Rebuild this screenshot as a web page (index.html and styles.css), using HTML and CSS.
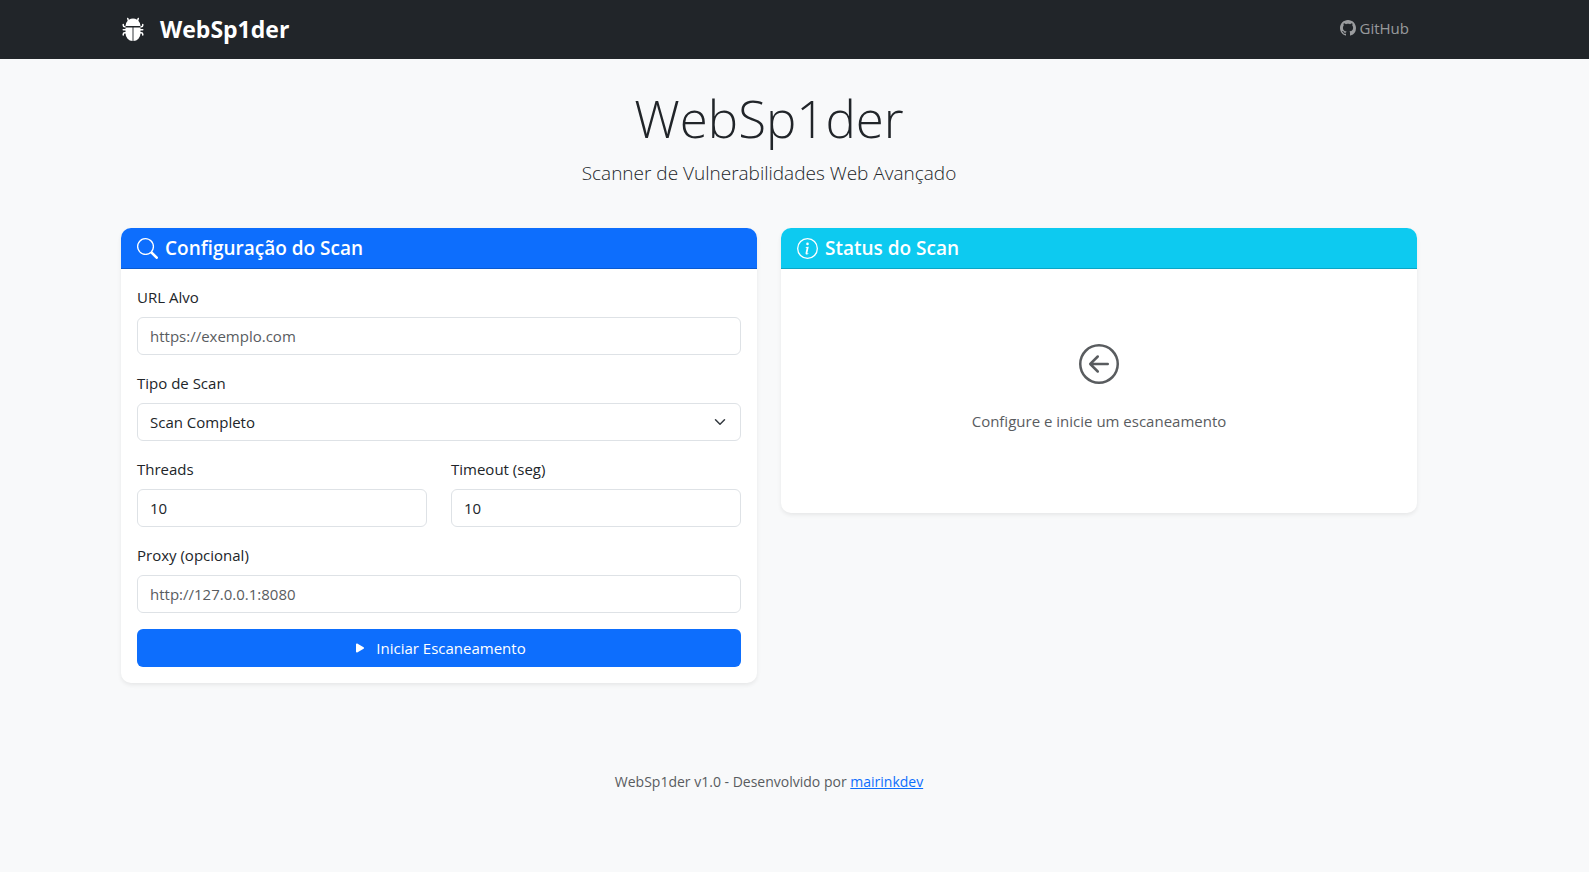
FILE: index.html
```html
<!DOCTYPE html>
<html lang="pt-BR">
<head>
<meta charset="utf-8">
<meta name="viewport" content="width=device-width, initial-scale=1">
<title>WebSp1der</title>
<link rel="stylesheet" href="styles.css">
</head>
<body>
<nav class="navbar">
  <div class="container navbar-row">
    <a class="brand" href="#">
      <svg class="brand-icon" viewBox="0 0 16 16" fill="currentColor" aria-hidden="true"><path d="M4.978.855a.5.5 0 1 0-.956.29l.41 1.352A5 5 0 0 0 3 6h10a5 5 0 0 0-1.432-3.503l.41-1.352a.5.5 0 1 0-.956-.29l-.291.956A5 5 0 0 0 8 1a5 5 0 0 0-2.731.811l-.29-.956z"/><path d="M13 6v1H8.300v8.975A5 5 0 0 0 13 11h.5a.5.5 0 0 1 .5.5v.5a.5.5 0 1 0 1 0v-.5a1.5 1.5 0 0 0-1.5-1.5H13V9h1.500a.5.5 0 0 0 0-1H13V7h.5A1.5 1.5 0 0 0 15 5.500V5a.5.5 0 0 0-1 0v.5a.5.5 0 0 1-.5.5zm-5.300 9.975V7H3V6h-.5a.5.5 0 0 1-.5-.5V5a.5.5 0 0 0-1 0v.5A1.500 1.500 0 0 0 2.500 7H3v1H1.500a.5.5 0 0 0 0 1H3v1h-.5A1.500 1.500 0 0 0 1 11.500v.5a.5.5 0 1 0 1 0v-.5a.5.5 0 0 1 .5-.5H3a5 5 0 0 0 4.700 4.975"/></svg>
      <span>WebSp1der</span>
    </a>
    <a class="nav-link" href="#">
      <svg class="icon" viewBox="0 0 16 16" fill="currentColor" aria-hidden="true"><path d="M8 0C3.58 0 0 3.58 0 8c0 3.54 2.29 6.53 5.47 7.59.4.07.55-.17.55-.38 0-.19-.01-.82-.01-1.49-2.010.37-2.530-.49-2.690-.94-.09-.23-.48-.94-.82-1.130-.28-.15-.68-.52-.01-.53.63-.01 1.080.58 1.230.82.72 1.210 1.870.87 2.330.66.07-.52.28-.87.51-1.070-1.780-.2-3.640-.89-3.640-3.950 0-.87.31-1.590.82-2.150-.08-.2-.36-1.020.08-2.120 0 0 .67-.21 2.200.82.64-.18 1.320-.27 2-.27s1.360.09 2 .27c1.530-1.040 2.200-.82 2.200-.82.44 1.100.16 1.920.08 2.120.51.56.82 1.270.82 2.150 0 3.070-1.870 3.750-3.650 3.950.29.25.54.73.54 1.480 0 1.070-.01 1.930-.01 2.200 0 .21.15.46.55.38A8.010 8.010 0 0 0 16 8c0-4.420-3.580-8-8-8"/></svg>
      <span>GitHub</span>
    </a>
  </div>
</nav>

<div class="page">
  <header class="container hero">
    <h1 class="title">WebSp1der</h1>
    <p class="lead">Scanner de Vulnerabilidades Web Avançado</p>
  </header>

  <main class="container columns">
    <section class="card">
      <h2 class="card-header header-primary">
        <svg class="header-icon" viewBox="0 0 16 16" fill="currentColor" aria-hidden="true"><path d="M11.742 10.344a6.500 6.500 0 1 0-1.397 1.398h-.001q.044.06.098.115l3.850 3.850a1 1 0 0 0 1.415-1.414l-3.850-3.850a1 1 0 0 0-.115-.1zM12 6.500a5.500 5.500 0 1 1-11 0 5.500 5.500 0 0 1 11 0"/></svg>
        <span>Configuração do Scan</span>
      </h2>
      <form class="card-body form">
        <div class="field">
          <label for="url">URL Alvo</label>
          <input class="control" id="url" type="url" placeholder="https://exemplo.com">
        </div>
        <div class="field">
          <label for="type">Tipo de Scan</label>
          <div class="select-wrap">
            <select class="control" id="type"><option>Scan Completo</option></select>
            <svg class="chevron" viewBox="0 0 16 16" fill="none" stroke="currentColor" stroke-width="2" stroke-linecap="round" stroke-linejoin="round" aria-hidden="true"><path d="m2 5 6 6 6-6"/></svg>
          </div>
        </div>
        <div class="columns">
          <div class="field">
            <label for="threads">Threads</label>
            <input class="control" id="threads" type="number" value="10">
          </div>
          <div class="field">
            <label for="timeout">Timeout (seg)</label>
            <input class="control" id="timeout" type="number" value="10">
          </div>
        </div>
        <div class="field">
          <label for="proxy">Proxy (opcional)</label>
          <input class="control" id="proxy" type="text" placeholder="http://127.0.0.1:8080">
        </div>
        <button class="button" type="button">
          <svg class="icon" viewBox="0 0 16 16" fill="currentColor" aria-hidden="true"><path d="m11.596 8.697-6.363 3.692c-.54.313-1.233-.066-1.233-.697V4.308c0-.63.692-1.010 1.233-.696l6.363 3.692a.802.802 0 0 1 0 1.393"/></svg>
          <span>Iniciar Escaneamento</span>
        </button>
      </form>
    </section>

    <section class="card">
      <h2 class="card-header header-info">
        <svg class="header-icon" viewBox="0 0 16 16" fill="currentColor" aria-hidden="true"><path d="M8 15A7 7 0 1 1 8 1a7 7 0 0 1 0 14m0 1A8 8 0 1 0 8 0a8 8 0 0 0 0 16"/><path d="m8.930 6.588-2.290.287-.082.38.45.083c.294.07.352.176.288.469l-.738 3.468c-.194.897.105 1.319.808 1.319.545 0 1.178-.252 1.465-.598l.088-.416c-.2.176-.492.246-.686.246-.275 0-.375-.193-.304-.533zM9 4.500a1 1 0 1 1-2 0 1 1 0 0 1 2 0"/></svg>
        <span>Status do Scan</span>
      </h2>
      <div class="card-body empty">
        <svg class="empty-icon" viewBox="0 0 16 16" fill="currentColor" aria-hidden="true"><path fill-rule="evenodd" d="M1 8a7 7 0 1 0 14 0A7 7 0 0 0 1 8m15 0A8 8 0 1 1 0 8a8 8 0 0 1 16 0m-4.500-.5a.5.5 0 0 1 0 1H5.707l2.147 2.146a.5.5 0 0 1-.708.708l-3-3a.5.5 0 0 1 0-.708l3-3a.5.5 0 1 1 .708.708L5.707 7.500z"/></svg>
        <p>Configure e inicie um escaneamento</p>
      </div>
    </section>
  </main>

  <footer class="container footer">WebSp1der v1.0 - Desenvolvido por <a href="#">mairinkdev</a></footer>
</div>
</body>
</html>
```
FILE: styles.css
```css
*, *::before, *::after { box-sizing: border-box; }

body {
  margin: 0;
  background: #f8f9fa;
  color: #212529;
  font-family: "Segoe UI", "Open Sans", "Noto Sans", sans-serif;
  font-size: 15px;
  line-height: 24px;
}

h1, h2, p { margin: 0; }

.container {
  width: 100%;
  max-width: 1320px;
  margin: 0 auto;
  padding: 0 12px;
}

.navbar {
  background: #212529;
  padding: 7px 51px 9px 0;
}

.navbar-row {
  display: flex;
  align-items: center;
  justify-content: space-between;
  min-height: 43px;
}

.brand {
  display: flex;
  align-items: center;
  gap: 15px;
  color: #fff;
  font-size: 23px;
  font-weight: 700;
  text-decoration: none;
}

.brand-icon { width: 24px; height: 24px; }

.nav-link {
  display: flex;
  align-items: center;
  gap: 4px;
  padding: 0 8px 2px;
  color: rgba(255, 255, 255, 0.55);
  text-decoration: none;
}

.icon { width: 16px; height: 16px; }

.page { padding: 24px 51px 48px 0; }

.hero {
  margin-bottom: 40px;
  text-align: center;
}

.title {
  padding-top: 4px;
  margin-bottom: 8px;
  font-size: 51px;
  font-weight: 300;
  line-height: 63px;
}

.lead {
  font-size: 19px;
  font-weight: 300;
  line-height: 30px;
}

.columns {
  display: grid;
  grid-template-columns: 1fr 1fr;
  align-items: start;
  gap: 24px;
}

.card {
  overflow: hidden;
  border-radius: 10px;
  background: #fff;
  box-shadow: 0 2px 4px rgba(0, 0, 0, 0.075);
}

.card-header {
  display: flex;
  align-items: center;
  gap: 7px;
  padding: 8px 16px;
  border-bottom: 1px solid rgba(0, 0, 0, 0.175);
  color: #fff;
  font-size: 19px;
  font-weight: 600;
  line-height: 24px;
}

.header-icon { width: 21px; height: 21px; }
.header-primary { background-color: #0d6efd; }
.header-info { background-color: #0dcaf0; }

.card-body { padding: 16px; }

.form {
  display: flex;
  flex-direction: column;
  gap: 16px;
}

.field {
  display: flex;
  flex-direction: column;
  gap: 8px;
  min-width: 0;
}

.control {
  width: 100%;
  height: 38px;
  padding: 6px 12px;
  border: 1px solid #dee2e6;
  border-radius: 6px;
  background: #fff;
  color: #212529;
  font: inherit;
  appearance: none;
}

.control::placeholder { color: #595c5f; opacity: 1; }

input[type="number"] { appearance: textfield; }

.select-wrap { position: relative; }

.chevron {
  position: absolute;
  top: 13px;
  right: 15px;
  width: 12px;
  height: 12px;
  color: #343a40;
  pointer-events: none;
}

.button {
  display: flex;
  align-items: center;
  justify-content: center;
  gap: 8px;
  height: 38px;
  border: 0;
  border-radius: 6px;
  background: #0d6efd;
  color: #fff;
  font: inherit;
}

.empty {
  display: flex;
  flex-direction: column;
  align-items: center;
  gap: 25px;
  padding: 75px 16px 80px;
  color: #595c5f;
}

.empty-icon { width: 40px; height: 40px; }

.footer {
  margin-top: 87px;
  color: #595c5f;
  font-size: 14px;
  text-align: center;
}

.footer a { color: #0d6efd; }
```
